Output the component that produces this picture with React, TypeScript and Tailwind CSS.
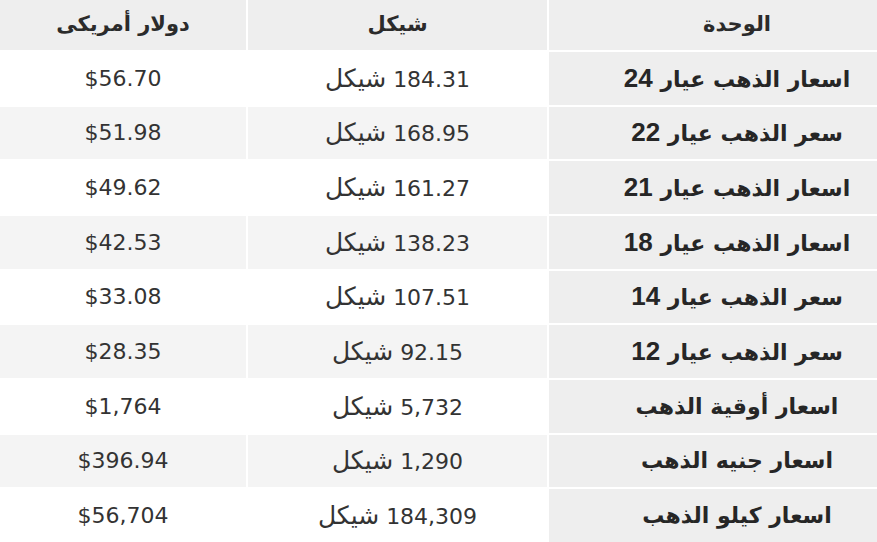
import React from "react";

const rows: [string, string, string, string, string][] = [
  ["اسعار الذهب عيار", "24", "184.31", "شيكل", "$56.70"],
  ["سعر الذهب عيار", "22", "168.95", "شيكل", "$51.98"],
  ["اسعار الذهب عيار", "21", "161.27", "شيكل", "$49.62"],
  ["اسعار الذهب عيار", "18", "138.23", "شيكل", "$42.53"],
  ["سعر الذهب عيار", "14", "107.51", "شيكل", "$33.08"],
  ["سعر الذهب عيار", "12", "92.15", "شيكل", "$28.35"],
  ["اسعار أوقية الذهب", "", "5,732", "شيكل", "$1,764"],
  ["اسعار جنيه الذهب", "", "1,290", "شيكل", "$396.94"],
  ["اسعار كيلو الذهب", "", "184,309", "شيكل", "$56,704"],
];

export default function App() {
  return (
    <div
      dir="rtl"
      className="w-[877px] h-[542px] bg-white grid grid-cols-[328px_299px_246px] grid-rows-[50px_repeat(9,1fr)] gap-[2px] overflow-hidden text-[#333]"
      style={{ fontFamily: '"DejaVu Sans", sans-serif' }}
    >
      <div className="bg-[#eeeeee] flex items-center justify-center pl-[48px] font-bold text-[21px] text-[#2b2b2b]">
        الوحدة
      </div>
      <div className="bg-[#eeeeee] flex items-center justify-center font-bold text-[21px] text-[#2b2b2b]">
        شيكل
      </div>
      <div className="bg-[#eeeeee] flex items-center justify-center font-bold text-[21px] text-[#2b2b2b]">
        دولار أمريكى
      </div>
      {rows.map((r, i) => {
        const alt = i % 2 === 1 ? "bg-[#f4f4f4]" : "bg-white";
        return (
          <React.Fragment key={i}>
            <div className="bg-[#eeeeee] flex items-center justify-center pl-[48px] font-bold text-[22px] text-[#262626]">
              <span>
                {r[0]}
                {r[1] && (
                  <>
                    {" "}
                    <span className="text-[26px]" style={{ fontFamily: '"Liberation Sans", sans-serif' }}>
                      {r[1]}
                    </span>
                  </>
                )}
              </span>
            </div>
            <div className={`${alt} flex items-center justify-center text-[22px]`}>
              <span>
                <span>{r[2]}</span> <span className="text-[25px]">{r[3]}</span>
              </span>
            </div>
            <div className={`${alt} flex items-center justify-center text-[22px]`}>
              <span dir="ltr">{r[4]}</span>
            </div>
          </React.Fragment>
        );
      })}
    </div>
  );
}
